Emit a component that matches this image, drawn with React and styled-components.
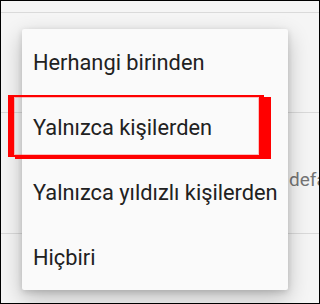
import React from 'react'
import styled, { createGlobalStyle } from 'styled-components'

const Global = createGlobalStyle`
  html, body { margin: 0; padding: 0; background: #f5f5f5; }
  * { box-sizing: border-box; }
`

const Screen = styled.div`
  position: relative;
  width: 320px;
  height: 304px;
  border: 1px solid #000;
  background: #f5f5f5;
  overflow: hidden;
  font-family: Roboto, "Noto Sans", sans-serif;
`

const SettingsList = styled.div`
  display: flex;
  flex-direction: column;
`

const SettingRow = styled.div`
  height: ${p => p.h}px;
  border-bottom: 1px solid #dadada;
  display: flex;
  align-items: center;
  overflow: hidden;
`

const Summary = styled.span`
  margin-left: 288px;
  margin-top: ${p => p.offset || 0}px;
  font-size: 19px;
  color: #757575;
  white-space: nowrap;
`

const Menu = styled.ul`
  position: absolute;
  left: 21px;
  top: 28px;
  width: 266px;
  margin: 0;
  padding: 1px 0 0;
  list-style: none;
  background: #fafafa;
  border-radius: 2px;
  box-shadow: 0 8px 22px rgba(0, 0, 0, 0.24), 0 2px 6px rgba(0, 0, 0, 0.14);
`

const MenuItem = styled.li`
  height: 65px;
  display: flex;
  align-items: center;
  padding-left: 11px;
  font-size: 21.8px;
  color: #212121;
  white-space: nowrap;
`

const Highlight = styled.div`
  position: absolute;
  left: 7px;
  top: 94px;
  width: 256px;
  height: 62px;
  border-style: solid;
  border-color: #ff0000;
  border-width: 2px 5px 2px 6px;
  box-shadow: 7px 2px 0 0 #ff0000;
  pointer-events: none;

  &::after {
    content: '';
    position: absolute;
    left: 0;
    top: 0;
    right: 0;
    bottom: 0;
    border: 1px solid rgba(255, 80, 80, 0.35);
  }
`

const options = [
  'Herhangi birinden',
  'Yalnızca kişilerden',
  'Yalnızca yıldızlı kişilerden',
  'Hiçbiri',
]

export default function App() {
  return (
    <Screen>
      <Global />
      <SettingsList>
        <SettingRow h={12} />
        <SettingRow h={100} />
        <SettingRow h={121}>
          <Summary offset={12}>default</Summary>
        </SettingRow>
      </SettingsList>
      <Menu>
        {options.map(o => (
          <MenuItem key={o}>{o}</MenuItem>
        ))}
      </Menu>
      <Highlight />
    </Screen>
  )
}
